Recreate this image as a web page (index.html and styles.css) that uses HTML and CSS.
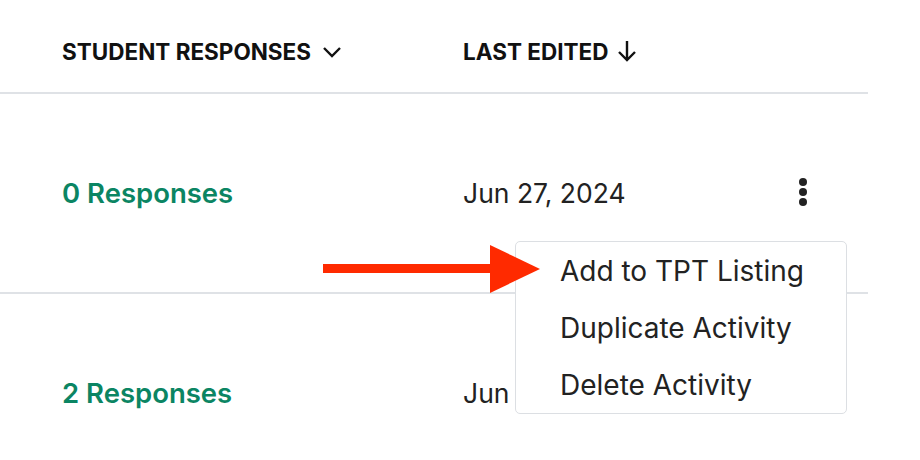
FILE: index.html
```html
<!DOCTYPE html>
<html>
<head>
<meta charset="utf-8">
<link rel="stylesheet" href="styles.css">
</head>
<body>
<div class="table">
  <div class="head">
    <div class="col1 th">STUDENT RESPONSES
      <svg class="chev" width="20" height="12" viewBox="0 0 20 12"><path d="M2 2 L10 10 L18 2" fill="none" stroke="#111" stroke-width="2.4"/></svg>
    </div>
    <div class="col2 th">LAST EDITED
      <svg class="down" width="20" height="22" viewBox="0 0 20 22"><path d="M10 1 V20 M2 12 L10 20 L18 12" fill="none" stroke="#111" stroke-width="2.4"/></svg>
    </div>
  </div>
  <div class="row">
    <div class="col1 resp">0 Responses</div>
    <div class="col2 date">Jun 27, 2024</div>
    <div class="kebab"><span></span><span></span><span></span></div>
  </div>
  <div class="row">
    <div class="col1 resp">2 Responses</div>
    <div class="col2 date">Jun 27, 2024</div>
    <div class="kebab hidden"></div>
  </div>
</div>
<div class="menu">
  <div class="item">Add to TPT Listing</div>
  <div class="item">Duplicate Activity</div>
  <div class="item">Delete Activity</div>
</div>
<svg class="arrow" width="230" height="50" viewBox="0 0 230 50"><rect x="0" y="19" width="170" height="9" fill="#ff2a00"/><polygon points="167,0 167,48 217,24" fill="#ff2a00"/></svg>
</body>
</html>
```
FILE: styles.css
```css
html, body { margin: 0; padding: 0; background: #fff; }
body { font-family: Inter, "Liberation Sans", sans-serif; color: #1f1f1f; width: 920px; height: 460px; overflow: hidden; position: relative; }
.table { width: 868px; height: 460px; overflow: hidden; }
.head { border-bottom: 2px solid #dfe2e6; display: flex; align-items: center; padding: 10px 0 0 62px; box-sizing: border-box; height: 94px; }
.row { height: 198px; border-bottom: 2px solid #dfe2e6; display: flex; align-items: center; padding-left: 62px; }
.col1 { width: 401px; flex: none; }
.col2 { width: 330px; flex: none; }
.th { font-size: 22.5px; font-weight: 700; color: #111; display: flex; align-items: center; }
.chev { margin-left: 11px; margin-top: 2px; }
.down { margin-left: 9px; }
.resp { font-size: 27.5px; font-weight: 600; color: #0b8563; }
.date { font-size: 26.5px; font-weight: 400; color: #222; }
.kebab { display: flex; flex-direction: column; gap: 2px; margin-left: 6px; margin-top: -2px; }
.kebab span { width: 8px; height: 8px; border-radius: 50%; background: #222; }
.kebab.hidden { visibility: hidden; }
.menu { position: absolute; left: 515px; top: 241px; width: 332px; height: 173px; background: #fff; border: 1px solid #dcdfe3; border-radius: 5px; box-sizing: border-box; padding: 6px 0 0 44px; }
.item { font-size: 28px; color: #222; height: 57px; line-height: 46px; white-space: nowrap; }
.arrow { position: absolute; left: 323px; top: 245px; }
```
